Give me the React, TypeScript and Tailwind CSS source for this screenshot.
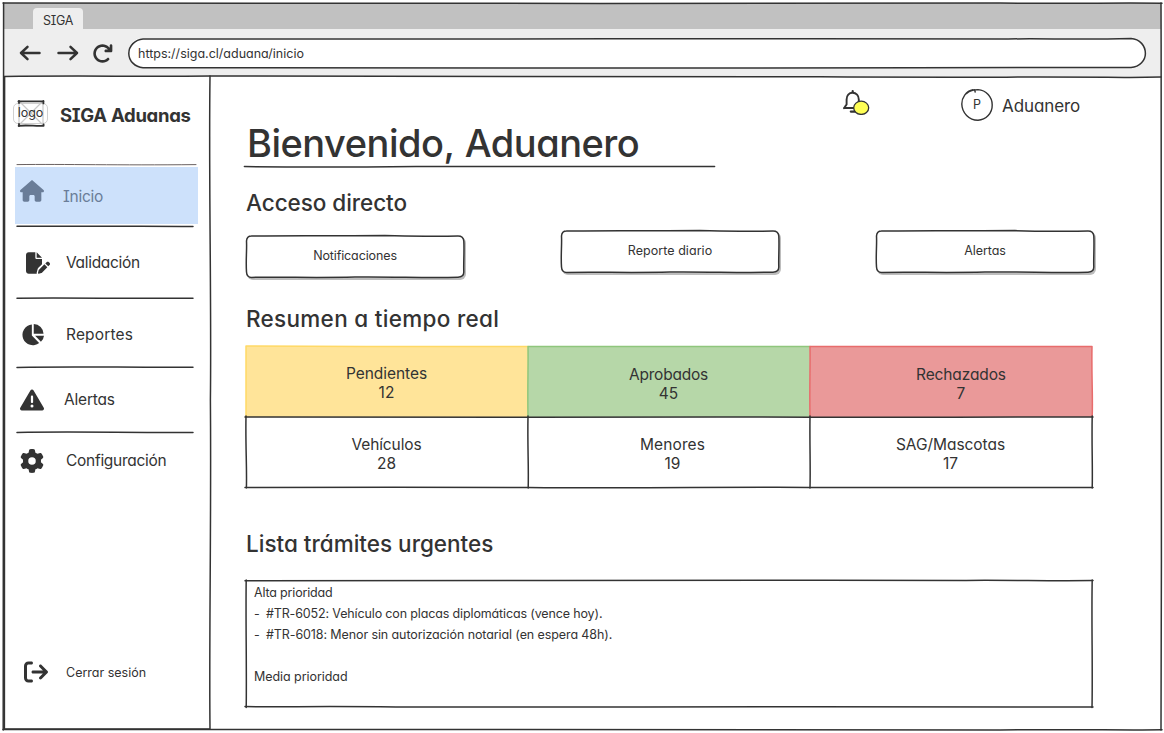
import type { ReactNode } from "react";
import {
  FaArrowRightFromBracket,
  FaArrowRotateRight,
  FaFilePen,
  FaGear,
  FaHouse,
  FaTriangleExclamation,
} from "react-icons/fa6";

const INK = "#333333";

/* Hand-drawn strokes laid over the box they decorate. */
function Ink({ paths, color = INK, width = 1.5 }: { paths: string[]; color?: string; width?: number }) {
  return (
    <svg
      className="pointer-events-none absolute left-0 top-0 h-px w-px overflow-visible"
      fill="none"
      stroke={color}
      strokeWidth={width}
      strokeLinecap="round"
      strokeLinejoin="round"
      aria-hidden="true"
    >
      {paths.map((d) => (
        <path key={d} d={d} />
      ))}
    </svg>
  );
}

function ArrowIcon({ d, className }: { d: string; className: string }) {
  return (
    <svg className={`h-[16px] w-[22px] ${className}`} viewBox="0 0 22 16" fill="none" stroke={INK} strokeWidth="2.5" strokeLinecap="round" strokeLinejoin="round" aria-hidden="true">
      <path d={d} />
    </svg>
  );
}

function PieIcon() {
  return (
    <svg className="h-[23px] w-[24px]" viewBox="0 0 24 24" fill="currentColor" aria-hidden="true">
      <path d="M10.8 1.6v11.4l7.6 7.9A10.8 10.8 0 1 1 10.8 1.6z" />
      <path d="M12.8 1A10.4 10.4 0 0 1 23 11.2H12.8z" />
      <path d="M14.2 13.2h9.3a10.8 10.8 0 0 1-3.2 6.4z" />
    </svg>
  );
}

function BellIcon() {
  return (
    <svg className="h-[26px] w-[28px] shrink-0" viewBox="0 0 28 26" fill="none" stroke={INK} strokeLinecap="round" strokeLinejoin="round" aria-hidden="true">
      <path strokeWidth="1.9" d="M2 19.2 4.6 15.4V10.5C4.6 6.4 7 3.8 10.6 3.8S16.8 6.4 16.8 10.5V14L20 19H2z" />
      <path strokeWidth="2.2" d="M10.7 2.2V3M8.8 22.6H13" />
      <ellipse cx="19.2" cy="18.8" rx="7.5" ry="6.6" fill="#ffff55" strokeWidth="1.3" />
    </svg>
  );
}

function NavRow({
  icon,
  iconBox,
  label,
  labelBox,
  row,
}: {
  icon: ReactNode;
  iconBox: string;
  label: string;
  labelBox: string;
  row: string;
}) {
  return (
    <a className={`relative flex items-start ${row}`}>
      <span className={`flex shrink-0 ${iconBox}`}>{icon}</span>
      <span className={`whitespace-nowrap leading-none ${labelBox}`}>{label}</span>
    </a>
  );
}

function ShortcutButton({ label, box, text }: { label: string; box: string; text: string }) {
  return (
    <button className={`relative flex h-[43px] w-[219px] justify-center rounded-[6px] bg-white pt-[15px] shadow-[2px_2px_0_0_#bdbdbd] ${box}`}>
      <Ink
        paths={[
          "M6.5 1C50 .2 95 1 140 .6C175 2 195 1.2 213 1Q218.4 1 218.8 6C219.4 17 218.4 28 218.8 37Q218.8 42 213 42.2C180 43 150 41.6 110 42C70 43 40 41.8 6.5 42.4Q1.8 42.4 1.5 37C.7 25 2 15 1.5 6Q1.8 1 6.5 1",
        ]}
      />
      <span className={`pl-[1px] text-[12.5px] leading-none ${text}`}>{label}</span>
    </button>
  );
}

function Cell({ label, value, box, text }: { label: string; value: string; box: string; text: string }) {
  return (
    <div className={`flex flex-col items-center text-[15.5px] ${box}`}>
      <span className={`leading-[19px] ${text}`}>{label}</span>
      <span className="leading-[19px]">{value}</span>
    </div>
  );
}

export default function App() {
  return (
    <div className="relative flex h-[733px] w-[1164px] flex-col overflow-hidden bg-white px-[4px] pt-[3px] font-['Inter',sans-serif] text-[#333333] [font-feature-settings:'cv11','cv08']">
      <header className="flex w-[1157px] flex-col">
        <div className="flex h-[26px] items-end bg-[#c1c1c1] pl-[29px]">
          <div className="flex h-[21px] w-[50px] justify-center rounded-t-[4px] bg-[#eeeeee] pt-[7px]">
            <span className="text-[12.5px] leading-none tracking-[-0.3px]">SIGA</span>
          </div>
        </div>
        <div className="flex h-[48px] items-center bg-[#eeeeee] pl-[15px]">
          <ArrowIcon className="" d="M20.5 8H2M8.5 1.8 2 8l6.5 6.2" />
          <ArrowIcon className="ml-[16px]" d="M1.5 8H20M13.5 1.8 20 8l-6.5 6.2" />
          <FaArrowRotateRight className="ml-[13px] h-[21px] w-[21px]" />
          <div className="relative ml-[15px] flex h-[30px] w-[1018px] items-center rounded-full bg-white pl-[10px]">
            <Ink
              paths={[
                "M15 1C180 0 320 2 480 .8C640 -.2 720 1.4 880 1C920 .2 940 2 1003 .6C1012 1 1017.4 8 1017.4 15.4C1017.4 22 1012 29 1003 29.4C860 29 740 30.2 600 30C440 30.4 240 28.8 15 29.8C7 29 .8 23 .8 15.4C.8 8 7 1.6 15 1",
              ]}
            />
            <span className="pt-[2px] text-[12.5px] leading-none">https://siga.cl/aduana/inicio</span>
          </div>
        </div>
      </header>

      <div className="flex h-[653px]">
        <aside className="flex w-[206px] shrink-0 flex-col">
          <div className="flex h-[90px] items-start pl-[9px]">
            <div className="relative mt-[26px] flex h-[21px] w-[35px] justify-center rounded-[5px] border border-[#d0d0d0] pt-[3px]">
              <Ink color="#c9c9c9" width={1.2} paths={["M5-3 29 21", "M29-3 5 21", "M5-3V21", "M29-3V21"]} />
              <Ink width={1.8} paths={["M4.4-2.6H29.6M29.4-3.2V-.6", "M4.6 21.8C14 20.8 22 22.4 29.6 21.8V20.4", "M5-3V-1", "M5 20V22"]} />
              <span className="relative text-[12.5px] leading-none">logo</span>
            </div>
            <h2 className="ml-[12px] mt-[29px] whitespace-nowrap text-[18.5px] font-bold leading-none tracking-[-0.3px]">SIGA Aduanas</h2>
          </div>

          <nav className="flex flex-col text-[15.5px]">
            <NavRow
              row="ml-[11px] h-[57px] w-[183px] bg-[#cde1fb] pl-[5px] text-[#6a7d98]"
              icon={<FaHouse className="h-[22px] w-[24px]" />}
              iconBox="pt-[13px] w-[43px]"
              label="Inicio"
              labelBox="mt-[22px] tracking-[-0.25px]"
            />
            <div className="relative ml-[13px] h-[2px] w-[178px]">
              <Ink paths={["M0-59.4C50-60 100-58.6 179-59.4"]} color="#6a6262" width={1} />
              <Ink paths={["M0 2.2C60 2.8 110 1.6 176 2.4"]} />
            </div>
            <NavRow row="h-[72px] pl-[22px]" icon={<FaFilePen className="h-[22px] w-[24px]" />} iconBox="pt-[26px] w-[40px]" label="Validación" labelBox="mt-[29px] tracking-[-0.32px]" />
            <div className="relative ml-[13px] h-0 w-[178px]">
              <Ink paths={["M0 .2C60-.4 110 .8 176 .2"]} />
            </div>
            <NavRow row="h-[69px] pl-[17px]" icon={<PieIcon />} iconBox="pt-[25px] w-[45px]" label="Reportes" labelBox="mt-[29px] tracking-[0.15px]" />
            <div className="relative ml-[13px] h-0 w-[178px]">
              <Ink paths={["M0 .4C60-.8 110 .6 176 .2"]} />
            </div>
            <NavRow row="h-[65px] pl-[16px]" icon={<FaTriangleExclamation className="h-[24px] w-[24px]" />} iconBox="pt-[21px] w-[44px]" label="Alertas" labelBox="mt-[25px] tracking-[-0.2px]" />
            <div className="relative ml-[13px] h-0 w-[178px]">
              <Ink paths={["M0 .4C60-.8 110 .8 176 .4"]} />
            </div>
            <NavRow row="h-[60px] pl-[16px]" icon={<FaGear className="h-[24px] w-[24px]" />} iconBox="pt-[17px] w-[46px]" label="Configuración" labelBox="mt-[21px] tracking-[-0.28px]" />
          </nav>
          <div className="mt-auto">
            <NavRow row="h-[70px] pl-[20px]" icon={<FaArrowRightFromBracket className="h-[24px] w-[24px]" />} iconBox="w-[42px]" label="Cerrar sesión" labelBox="mt-[7px] text-[12.5px]" />
          </div>
        </aside>

        <main className="flex w-[885px] flex-col pl-[36px]">
          <div className="flex h-[46px] items-start pt-[12px]">
            <div className="ml-[596px]">
              <BellIcon />
            </div>
            <div className="relative ml-[91px] flex h-[32px] w-[32px] justify-center pt-[10px]">
              <Ink paths={["M12 .8C5 2 .6 9 .8 15C1 24 8 31 17 31.2C25 31 31.4 24 31.2 16C31.4 8 25 1 17 .6C12 .6 9 1.6 5.6 4.4M13.6 .8 14.2 3"]} width={1.4} />
              <span className="text-[12.5px] leading-none">P</span>
            </div>
            <span className="ml-[9px] mt-[9px] text-[17px] leading-none tracking-[-0.08px]">Aduanero</span>
          </div>

          <h1 className="relative h-[69px] whitespace-nowrap text-[38px] font-medium leading-none tracking-[-0.5px]">
            <span className="block pl-px pt-px [word-spacing:1px]">Bienvenido, Aduanero</span>
            <Ink paths={["M-1.6 43.6C60 44.4 110 44.2 170 43.4C230 44.2 300 42.8 468.6 43.4"]} />
          </h1>

          <h2 className="h-[38px] text-[22.5px] font-[450] leading-none tracking-[-0.05px]">Acceso directo</h2>
          <div className="-ml-[1px] flex h-[78px] shrink-0 items-start">
            <ShortcutButton label="Notificaciones" box="mt-[5px]" text="tracking-[-0.12px]" />
            <ShortcutButton label="Reporte diario" box="ml-[96px]" text="tracking-[0.05px]" />
            <ShortcutButton label="Alertas" box="ml-[96px]" text="tracking-[-0.05px]" />
          </div>

          <h2 className="h-[38px] text-[22.5px] font-[450] leading-none tracking-[0.3px]">Resumen a tiempo real</h2>
          <div className="relative grid h-[142px] w-[846px] shrink-0 grid-cols-3 grid-rows-2">
            <Cell label="Pendientes" value="12" box="bg-[#ffe499] pt-[18px] pr-[1px]" text="tracking-[-0.05px]" />
            <Cell label="Aprobados" value="45" box="bg-[#b6d7a8] pt-[19px] pr-[1px]" text="tracking-[-0.25px]" />
            <Cell label="Rechazados" value="7" box="bg-[#ea9999] pt-[19px] pl-[20px]" text="tracking-[-0.12px]" />
            <Cell label="Vehículos" value="28" box="pt-[18px] pr-[1px]" text="tracking-[-0.12px]" />
            <Cell label="Menores" value="19" box="pt-[18px] pl-[7px]" text="tracking-[0.1px]" />
            <Cell label="SAG/Mascotas" value="17" box="pt-[18px] pr-[1px]" text="tracking-[-0.05px]" />
            <Ink color="#ffd966" paths={["M0 71V0C90 1 200 0 282 .4"]} />
            <Ink color="#8fc67c" paths={["M282 71C281.4 40 282.4 20 282 .6C370-.2 480 1 564 .4"]} />
            <Ink color="#e86c6c" paths={["M564 71C563.4 40 564.4 20 564 .6C650 1 760 0 846 .6C845.4 30 847 50 846.2 70"]} />
            <Ink paths={["M-1 71C90 71.6 180 70.6 282 71.2C380 71.6 470 70.6 564 71.2C650 70.8 760 71.6 847 71", "M0 70C-.6 100 1 120 .4 142M-1 141.4C90 141.8 190 140.8 282 141.4C380 142.4 470 141 564 141.4C660 142 760 141 847 141.6", "M282 70C281.4 100 282.8 120 282.2 142", "M564 70C563.6 100 564.6 120 564 142", "M846.2 70C845.6 100 846.8 120 846.2 142"]} />
          </div>

          <h2 className="mt-[45px] h-[47px] shrink-0 text-[22.5px] font-[450] leading-none tracking-0">Lista trámites urgentes</h2>
          <section className="relative flex h-[127px] w-[846px] shrink-0 flex-col whitespace-pre pl-[8px] pt-[2px] text-[12.5px] leading-[21px]">
            <Ink paths={["M-1 .8C100 .2 200 1 300 .4C430 1.4 580-.4 720 .4C770 0 800 1.2 847 .6", "M.2 0C-.4 40 .8 90 .2 127.6", "M-1 126.6C40 127.2 70 126 150 127C300 126 420 127.8 560 126.8C660 127.6 760 126.4 847 127", "M846.2 0C845.4 40 846.8 90 846 127.6"]} />
            <p className="tracking-[-0.17px]">Alta prioridad</p>
            <div className="flex"><span className="w-[12px]">-</span><span className="tracking-[-0.14px]">#TR-6052: Vehículo con placas diplomáticas (vence hoy).</span></div>
            <div className="flex"><span className="w-[12px]">-</span><span className="tracking-[-0.1px]">#TR-6018: Menor sin autorización notarial (en espera 48h).</span></div>
            <p className="mt-[21px] tracking-[-0.06px]">Media prioridad</p>
          </section>
        </main>
      </div>

      <Ink
        paths={[
          "M3 3C200 3.6 400 2.4 600 3.4C800 2.6 900 4.2 1000 3C1080 3.8 1110 2.6 1162 3.2",
          "M1161 3C1161.8 200 1160.4 400 1161.4 560C1160.8 640 1161.6 700 1161 730",
          "M3 729.6C100 730 250 729 420 729.4C600 731 800 728.6 1000 730C1080 729.2 1120 730.4 1162 729.8",
          "M3.6 3C3 200 4 400 3.2 730",
          "M4 76.4C80 75.6 140 76.6 210 76C400 77.6 600 76.4 820 76.8C960 77.8 1080 76.4 1130 77.6L1161 77",
          "M4.6 77C3.6 240 5.6 480 4.4 729C80 728.4 150 729.4 210 729C209 640 211.4 520 210.4 400C211.6 300 208.6 180 210 76",
        ]}
      />
    </div>
  );
}
